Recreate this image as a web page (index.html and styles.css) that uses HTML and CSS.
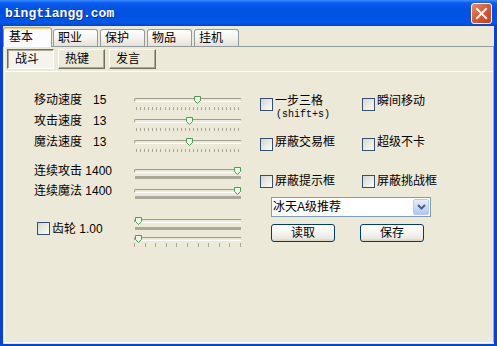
FILE: index.html
```html
<!DOCTYPE html>
<html lang="zh-CN">
  <head>
    <meta charset="UTF-8" />
    <title>bingtiangg.com</title>
    <link rel="stylesheet" href="styles.css">
  </head>
  <body>
    <div class="window">
      <!-- Title bar -->
      <div class="titlebar">
        <span class="title">bingtiangg.com</span>
        <button class="close" aria-label="关闭">
          <svg width="13" height="13" viewBox="0 0 13 13">
            <path d="M2 2 L11 11 M11 2 L2 11" stroke="#fff" stroke-width="2" stroke-linecap="square" />
          </svg>
        </button>
      </div>

      <div class="frame">
        <!-- Main tabs -->
        <div class="tabs">
          <span class="tab active">基本</span>
          <span class="tab">职业</span>
          <span class="tab">保护</span>
          <span class="tab">物品</span>
          <span class="tab">挂机</span>
        </div>

        <div class="tab-page">
          <!-- Sub tabs (button style) -->
          <div class="subtabs">
            <span class="subtab active">战斗</span>
            <span class="subtab">热键</span>
            <span class="subtab">发言</span>
          </div>

          <div class="sub-page">
            <!-- Speed sliders -->
            <div class="sliders">
              <div class="srow">
                <span class="label"><span class="name">移动速度</span>15</span>
                <div class="slider">
                  <div class="track"><span class="thumb" style="--v: 0.6"></span></div>
                  <div class="ticks"></div>
                </div>
              </div>
              <div class="srow">
                <span class="label"><span class="name">攻击速度</span>13</span>
                <div class="slider">
                  <div class="track"><span class="thumb" style="--v: 0.52"></span></div>
                  <div class="ticks"></div>
                </div>
              </div>
              <div class="srow">
                <span class="label"><span class="name">魔法速度</span>13</span>
                <div class="slider">
                  <div class="track"><span class="thumb" style="--v: 0.52"></span></div>
                  <div class="ticks"></div>
                </div>
              </div>

              <div class="srow tight first-of-group">
                <span class="label">连续攻击 1400</span>
                <div class="slider">
                  <div class="track"><span class="thumb" style="--v: 1"></span></div>
                  <div class="ticks dense"></div>
                </div>
              </div>
              <div class="srow tight">
                <span class="label">连续魔法 1400</span>
                <div class="slider">
                  <div class="track"><span class="thumb" style="--v: 1"></span></div>
                  <div class="ticks dense"></div>
                </div>
              </div>

              <div class="srow gear">
                <label class="label gear-label"><span class="box"></span>齿轮 1.00</label>
                <div class="slider">
                  <div class="track"><span class="thumb" style="--v: 0"></span></div>
                  <div class="ticks dense"></div>
                  <div class="track second"><span class="thumb" style="--v: 0"></span></div>
                  <div class="ticks sparse"></div>
                </div>
              </div>
            </div>

            <!-- Options -->
            <div class="options">
              <div class="orow r1">
                <label class="opt"><span class="box"></span><span>一步三格<br /><small>(shift+s)</small></span></label>
                <label class="opt"><span class="box"></span>瞬间移动</label>
              </div>
              <div class="orow r2">
                <label class="opt"><span class="box"></span>屏蔽交易框</label>
                <label class="opt"><span class="box"></span>超级不卡</label>
              </div>
              <div class="orow r3">
                <label class="opt"><span class="box"></span>屏蔽提示框</label>
                <label class="opt"><span class="box"></span>屏蔽挑战框</label>
              </div>

              <div class="combo">
                <span class="combo-text">冰天A级推荐</span>
                <span class="combo-btn">
                  <svg width="9" height="6" viewBox="0 0 9 6">
                    <path d="M1 1 L4.5 4.5 L8 1" fill="none" stroke="#4d6185" stroke-width="2" />
                  </svg>
                </span>
              </div>

              <div class="buttons">
                <button class="btn">读取</button>
                <button class="btn">保存</button>
              </div>
            </div>
          </div>
        </div>
      </div>
    </div>
  </body>
</html>
```

FILE: styles.css
```css
/* General */
body {
  margin: 0;
  padding: 0;
  font-family: "Liberation Sans", "Noto Sans CJK SC", sans-serif;
  font-size: 12px;
  color: #000;
  overflow: hidden;
}

.window {
  width: 497px;
  height: 346px;
  display: flex;
  flex-direction: column;
  background: #ece9d8;
}

/* Title bar */
.titlebar {
  height: 26px;
  flex: none;
  display: flex;
  align-items: center;
  justify-content: space-between;
  padding: 0 5px;
  background: linear-gradient(
    to bottom,
    #3b8cff 0,
    #0a5cf0 3px,
    #0054e3 8px,
    #0052e2 60%,
    #0058ea 88%,
    #0042d0 100%
  );
}

.title {
  font-family: "Liberation Mono", monospace;
  font-weight: bold;
  font-size: 13px;
  color: #fff;
  text-shadow: 1px 1px 0 #0a2b9e;
}

.close {
  width: 21px;
  height: 21px;
  padding: 0;
  border: 1px solid #fff;
  border-radius: 3px;
  background: linear-gradient(135deg, #f08a66 0, #dd5a35 45%, #c4401c 100%);
  display: flex;
  align-items: center;
  justify-content: center;
}

/* Window frame */
.frame {
  flex: 1;
  display: flex;
  flex-direction: column;
  border-style: solid;
  border-color: #0a3fd8;
  border-width: 0 3px 2px 3px;
  background: #ece9d8;
}

/* Main tabs */
.tabs {
  height: 20px;
  padding-top: 1px;
  box-sizing: border-box;
  display: flex;
  align-items: flex-end;
}

.tab {
  width: 45px;
  height: 17px;
  box-sizing: border-box;
  margin-left: 2px;
  padding-left: 4px;
  line-height: 17px;
  border: 1px solid #919b9c;
  border-bottom: none;
  border-radius: 3px 3px 0 0;
  background: linear-gradient(to bottom, #fff 0, #f4f3ee 50%, #e4e2d8 100%);
}

.tab.active {
  width: 49px;
  height: 20px;
  margin-left: 0;
  margin-bottom: -1px;
  padding-left: 5px;
  line-height: 19px;
  border-top: 1px solid #e8a33a;
  box-shadow: inset 0 1px 0 #fcd57c;
  background: #fcfcfe;
  position: relative;
  z-index: 1;
}

.tab.active + .tab {
  margin-left: 1px;
}

.tab-page {
  flex: 1;
  margin: 0 0 1px 1px;
  border-top: 1px solid #919b9c;
  border-left: 1px solid #fff;
  border-right: 1px solid #aca899;
  border-bottom: 1px solid #fff;
  display: flex;
  flex-direction: column;
}

/* Sub tabs */
.subtabs {
  height: 24px;
  box-sizing: border-box;
  padding: 2px 0 0 2px;
  display: flex;
  gap: 4px;
}

.subtab {
  width: 47px;
  height: 20px;
  box-sizing: border-box;
  padding-left: 6px;
  line-height: 18px;
  border: 1px solid;
  border-color: #fff #716f64 #716f64 #fff;
  box-shadow: inset -1px -1px 0 #aca899;
}

.subtab.active {
  padding-left: 7px;
  border-color: #716f64 #fff #fff #716f64;
  box-shadow: inset 1px 1px 0 #aca899;
  background: #f4f3ee;
}

.sub-page {
  flex: 1;
  border-top: 1px solid #fff;
  padding: 22px 0 0 29px;
  display: flex;
  gap: 18px;
}

/* Sliders */
.sliders {
  width: 208px;
}

.srow {
  display: flex;
  height: 21px;
}

.srow.tight {
  height: 20px;
}

.srow.first-of-group {
  margin-top: 8px;
}

.srow.gear {
  margin-top: 10px;
  height: 36px;
}

.label {
  width: 100px;
  line-height: 12px;
  white-space: nowrap;
}

.name {
  display: inline-block;
  width: 59px;
}

.slider {
  width: 108px;
}

.track {
  position: relative;
  height: 2px;
  margin-top: 4px;
  border-top: 1px solid #9d9b8f;
  border-left: 1px solid #9d9b8f;
  border-bottom: 1px solid #fff;
  border-right: 1px solid #e0ded4;
  border-radius: 2px 2px 0 2px;
}

.thumb {
  position: absolute;
  top: -3px;
  left: calc((100% - 7px) * var(--v));
  width: 7px;
  height: 8px;
  background: url("data:image/svg+xml,%3Csvg xmlns='http://www.w3.org/2000/svg' width='7' height='8'%3E%3Cpath d='M0.5 0.5 H6.5 V4.5 L3.5 7.5 L0.5 4.5 Z' fill='%23eef6e6' stroke='%234f9a55'/%3E%3C/svg%3E") no-repeat;
}

.ticks {
  width: 103px;
  height: 3px;
  margin: 5px 0 0 2px;
  background: repeating-linear-gradient(to right, #a9a798 0 1px, transparent 1px 4.08px);
}

.ticks.dense {
  width: 106px;
  margin: 3px 0 0 1px;
  background: #aca899;
}

.gear .ticks.dense {
  margin-top: 4px;
}

.track.second {
  margin-top: 7px;
}

.ticks.sparse {
  width: 108px;
  height: 4px;
  margin: 2px 0 0 0;
  background: repeating-linear-gradient(to right, #a9a798 0 1px, transparent 1px 10.6px);
}

/* Checkboxes */
.box {
  flex: none;
  width: 13px;
  height: 13px;
  box-sizing: border-box;
  border: 1px solid #34506e;
  background: linear-gradient(135deg, #d6d6d0 0, #eeeee9 60%, #fbfbf9 100%);
}

.gear-label {
  display: flex;
  align-items: center;
  gap: 2px;
  padding: 7px 0 0 3px;
  height: 13px;
}

/* Options */
.options {
  padding-top: 1px;
}

.orow {
  display: flex;
}

.orow.r1 {
  height: 41px;
}

.orow.r2 {
  height: 39px;
}

.orow.r3 {
  height: 22px;
}

.opt {
  width: 102px;
  display: flex;
  line-height: 12px;
  white-space: nowrap;
}

.opt .box {
  margin: 2px 2px 0 0;
}

.orow.r1 .opt .box {
  margin-top: 3px;
}

.orow.r3 .opt .box {
  margin-top: 0;
}

.opt small {
  font-family: "Liberation Mono", monospace;
  font-size: 10px;
  margin-left: 1px;
}

/* Combo box */
.combo {
  width: 160px;
  height: 20px;
  box-sizing: border-box;
  margin-left: 11px;
  border: 1px solid #7f9db9;
  background: #fff;
  display: flex;
  align-items: center;
  justify-content: space-between;
  padding: 0 1px 0 1px;
}

.combo-text {
  line-height: 12px;
}

.combo-btn {
  width: 16px;
  height: 16px;
  box-sizing: border-box;
  border: 1px solid #b9cbf3;
  border-radius: 2px;
  background: linear-gradient(to bottom, #e6eefc 0, #c6d7fb 60%, #b0c6f5 100%);
  display: flex;
  align-items: center;
  justify-content: center;
}

/* Buttons */
.buttons {
  display: flex;
  gap: 25px;
  margin: 7px 0 0 11px;
}

.btn {
  width: 64px;
  height: 18px;
  padding: 0;
  font-family: "Liberation Sans", "Noto Sans CJK SC", sans-serif;
  font-size: 12px;
  line-height: 14px;
  border: 1px solid #003c74;
  border-radius: 3px;
  background: linear-gradient(to bottom, #fff 0, #f5f4f0 50%, #e8e7e0 85%, #d6d0c5 100%);
  color: #000;
}
```
